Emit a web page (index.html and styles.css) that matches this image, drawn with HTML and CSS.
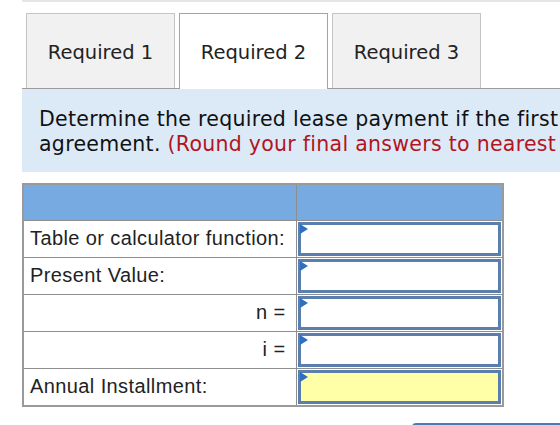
FILE: index.html
```html
<!DOCTYPE html>
<html lang="en">
<head>
    <meta charset="UTF-8">
    <meta name="viewport" content="width=device-width, initial-scale=1.0">
    <title>Lease Payment</title>
    <link rel="stylesheet" href="styles.css">
</head>
<body>

    <div class="page">
        <!-- Top separator -->
        <div class="top-rule"></div>

        <!-- Tabs -->
        <div class="tabs">
            <button class="tab">Required 1</button>
            <button class="tab active">Required 2</button>
            <button class="tab">Required 3</button>
        </div>

        <!-- Question prompt -->
        <div class="prompt">
            <p>Determine the required lease payment if the first<br>
            agreement. <span class="note">(Round your final answers to nearest</span></p>
        </div>

        <!-- Answer table -->
        <table class="answer">
            <tr class="head">
                <th></th>
                <th></th>
            </tr>
            <tr>
                <td class="label">Table or calculator function:</td>
                <td class="field"><div class="entry"><span class="flag"></span></div></td>
            </tr>
            <tr>
                <td class="label">Present Value:</td>
                <td class="field"><div class="entry"><span class="flag"></span></div></td>
            </tr>
            <tr>
                <td class="label right">n =</td>
                <td class="field"><div class="entry"><span class="flag"></span></div></td>
            </tr>
            <tr>
                <td class="label right">i =</td>
                <td class="field"><div class="entry"><span class="flag"></span></div></td>
            </tr>
            <tr>
                <td class="label">Annual Installment:</td>
                <td class="field"><div class="entry result"><span class="flag"></span></div></td>
            </tr>
        </table>

        <!-- Navigation button (partly visible) -->
        <div class="nav-btn"></div>
    </div>

</body>
</html>
```

FILE: styles.css
```css
/* General Styling */
* {
    margin: 0;
    padding: 0;
    box-sizing: border-box;
}
body {
    width: 560px;
    height: 425px;
    overflow: hidden;
    background-color: #fff;
    color: #1a1a1a;
    font-family: "DejaVu Sans", Verdana, sans-serif;
}

.page {
    margin-left: 22px;
    width: 538px;
}

.top-rule {
    height: 2px;
    background-color: #e6e6e6;
}

/* Tabs */
.tabs {
    display: flex;
    gap: 4px;
    margin-top: 11px;
    padding-left: 4px;
    border-bottom: 1px solid #9c9c9c;
}

.tab {
    width: 149px;
    height: 75px;
    padding-top: 3px;
    border: 1px solid #c4c4c4;
    border-bottom: none;
    background-color: #f1f1f1;
    color: #222;
    font-family: "DejaVu Sans", Verdana, sans-serif;
    font-size: 19.5px;
    cursor: pointer;
}

.tab.active {
    height: 76px;
    padding-top: 2px;
    margin-bottom: -1px;
    background-color: #fff;
    border-color: #a4a4a4;
}

/* Prompt */
.prompt {
    background-color: #dceaf8;
    padding: 18px 0 15px 17px;
    height: 83px;
}

.prompt p {
    font-size: 20.5px;
    line-height: 25px;
    letter-spacing: 0.28px;
    white-space: nowrap;
    color: #111;
}

.prompt .note {
    color: #b3141d;
}

/* Answer table */
.answer {
    margin-top: 11px;
    border-collapse: collapse;
    border: 2px solid #9a9a9a;
    font-family: "Liberation Sans", Arial, sans-serif;
    font-size: 20px;
    letter-spacing: 0.4px;
    color: #222;
}

.answer th,
.answer td {
    height: 36px;
    border: 1px solid #8e8e8e;
    padding: 0;
}

.answer .head th {
    background-color: #78aae2;
}

.answer th:first-child,
.answer td.label {
    width: 273px;
}

.answer td.label {
    padding-left: 6px;
}

.answer td.right {
    text-align: right;
    padding-right: 10px;
}

.answer td.field {
    width: 207px;
    padding: 1px;
}

.entry {
    position: relative;
    height: 34px;
    border: 3px solid #5a7eae;
    background-color: #fff;
}

.entry.result {
    background-color: #ffffa8;
}

.flag {
    position: absolute;
    top: -1px;
    left: -1px;
    width: 0;
    height: 0;
    border-top: 5px solid transparent;
    border-bottom: 5px solid transparent;
    border-left: 8px solid #2f6fc2;
}

/* Bottom button edge */
.nav-btn {
    margin-top: 16px;
    margin-left: 390px;
    width: 200px;
    height: 30px;
    border: 2px solid #4a7ab8;
    border-radius: 4px;
}
```
